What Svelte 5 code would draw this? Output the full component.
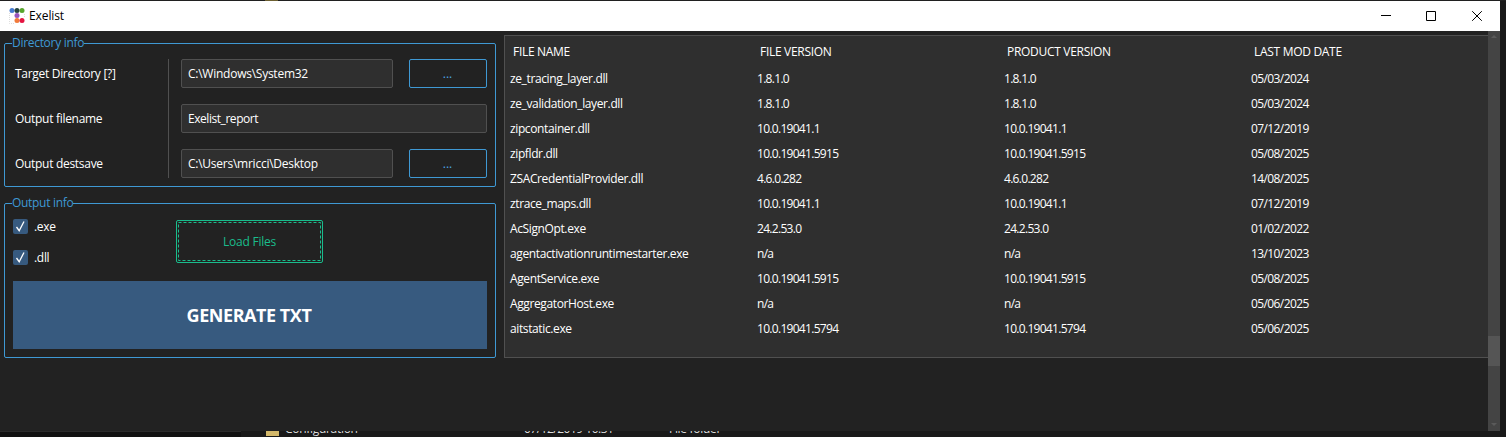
<script>
  const columns = ['FILE NAME', 'FILE VERSION', 'PRODUCT VERSION', 'LAST MOD DATE'];
  const files = [
    ['ze_tracing_layer.dll', '1.8.1.0', '05/03/2024'],
    ['ze_validation_layer.dll', '1.8.1.0', '05/03/2024'],
    ['zipcontainer.dll', '10.0.19041.1', '07/12/2019'],
    ['zipfldr.dll', '10.0.19041.5915', '05/08/2025'],
    ['ZSACredentialProvider.dll', '4.6.0.282', '14/08/2025'],
    ['ztrace_maps.dll', '10.0.19041.1', '07/12/2019'],
    ['AcSignOpt.exe', '24.2.53.0', '01/02/2022'],
    ['agentactivationruntimestarter.exe', 'n/a', '13/10/2023'],
    ['AgentService.exe', '10.0.19041.5915', '05/08/2025'],
    ['AggregatorHost.exe', 'n/a', '05/06/2025'],
    ['aitstatic.exe', '10.0.19041.5794', '05/06/2025']
  ];
  const types = ['.exe', '.dll'];
</script>

<div class="desktop">
  <div class="behind-top"><i></i></div>
  <div class="window">
    <header>
      <svg class="logo" width="16" height="16" viewBox="0 0 16 16">
        <path d="M.5 5v10.500H5M15.500 6v4" fill="none" stroke="#ddd" stroke-dasharray="1 1" />
        <circle cx="3" cy="2.500" r="2.500" fill="#477bd1" />
        <circle cx="8" cy="2.500" r="2.500" fill="#26443f" />
        <circle cx="13" cy="2.500" r="2.500" fill="#58a52d" />
        <circle cx="8" cy="7.500" r="2.500" fill="#9855bd" />
        <circle cx="8" cy="12.500" r="2.500" fill="#f17b3b" />
        <circle cx="13" cy="12.500" r="2.500" fill="#e51440" />
      </svg>
      <h1>Exelist</h1>
      <div class="controls">
        <svg viewBox="0 0 10 10"><path d="M0 4.500H10" /></svg>
        <svg viewBox="0 0 10 10"><path d="M.5 .5H9.500V9.500H.5Z" /></svg>
        <svg viewBox="0 0 10 10"><path d="M.2 .2L9.800 9.800M9.800 .2L.2 9.800" /></svg>
      </div>
    </header>
    <main>
      <div class="left">
        <section class="group directory">
          <h2>Directory info</h2>
          <div class="labels">
            <span>Target Directory [?]</span><span>Output filename</span><span>Output destsave</span>
          </div>
          <div class="fields">
            <div class="field">C:\Windows\System32</div>
            <button class="browse">...</button>
            <div class="field name">Exelist_report</div>
            <div class="field">C:\Users\mricci\Desktop</div>
            <button class="browse">...</button>
          </div>
        </section>
        <section class="group output">
          <h2>Output info</h2>
          <div class="options">
            <div class="checks">
              {#each types as type}
                <div class="check">
                  <svg width="15" height="15" viewBox="0 0 15 15">
                    <rect width="15" height="15" rx="2" fill="#375a7f" />
                    <path d="M3.500 8L6.200 11.700L11 2.500" fill="none" stroke="#fff" stroke-width="1.300" />
                  </svg>
                  <span>{type}</span>
                </div>
              {/each}
            </div>
            <button class="load">
              <svg width="145" height="41"><rect x="1.500" y="1.500" width="142" height="38" /></svg>
              <span>Load Files</span>
            </button>
          </div>
          <button class="generate">GENERATE TXT</button>
        </section>
      </div>
      <div class="table">
        <div class="row head">
          {#each columns as column}<span>{column}</span>{/each}
        </div>
        {#each files as [name, version, date]}
          <div class="row">
            <span class="filename">{name}</span>
            <span class="version">{version}</span>
            <span class="version">{version}</span>
            <span class="date">{date}</span>
          </div>
        {/each}
      </div>
      <div class="scrollbar">
        <svg width="6" height="4" viewBox="0 0 6 4"><path d="M0 3L3 0L6 3Z" /></svg>
        <div class="thumb"></div>
        <svg width="6" height="4" viewBox="0 0 6 4"><path d="M0 0H6L3 3Z" /></svg>
      </div>
    </main>
  </div>
  <footer>
    <i class="pane"></i>
    <i class="folder"></i>
    <span class="config">Configuration</span>
    <span class="modified">07/12/2019 10:31</span>
    <span class="kind">File folder</span>
  </footer>
</div>

<style>
  :global(body) { margin: 0; background: #191919; }
  * { box-sizing: border-box; }
  .desktop { height: 437px; overflow: hidden; background: #191919; color: #fff; font: 12px/16px "Open Sans", "Noto Sans", sans-serif; letter-spacing: -.3px; }
  .behind-top { height: 1px; background: #202020; }
  .behind-top i { display: block; width: 13px; height: 1px; margin-left: 265px; background: #6d6032; }
  .window { width: 1500px; height: 430px; background: #222; }
  header { display: flex; align-items: center; height: 30px; padding-left: 8px; background: #fff; color: #000; }
  .logo { margin: -1px 0 0 1px; }
  h1 { margin: 0 0 0 4px; font: inherit; letter-spacing: -.1px; }
  .controls { display: flex; margin-left: auto; }
  .controls svg { width: 10px; height: 10px; margin-left: 36px; fill: none; stroke: #000; }
  .controls svg:first-child { margin-right: -1px; }
  .controls svg:last-child { margin-right: 18px; }
  main { display: flex; height: 400px; }
  .left { width: 504px; padding: 12px 0 0 4px; }
  .group { width: 492px; border: 1px solid #3f99d4; border-radius: 2px; }
  h2 { width: max-content; height: 16px; margin: -9px 0 0 7px; background: #222; color: #3f99d4; font: inherit; white-space: nowrap; }
  .directory { display: grid; grid-template-columns: 164px 1fr; grid-template-rows: 7px 119px; height: 144px; row-gap: 8px; }
  .directory h2 { grid-column: 1 / 3; }
  .labels { display: flex; flex-direction: column; justify-content: space-between; padding: 7px 0 6px 10px; border-right: 1px solid #505050; }
  .fields { display: grid; grid-template-columns: 212px 78px; gap: 16px; padding-left: 12px; }
  .field { height: 29px; padding: 6px; border: 1px solid #505050; border-radius: 2px; background: #2f2f2f; letter-spacing: -.25px; }
  .name { grid-column: 1 / 3; letter-spacing: -.45px; }
  button { padding: 0; border: 1px solid #3f99d4; border-radius: 2px; background: transparent; color: #3f99d4; font: inherit; letter-spacing: -.25px; }
  .browse { padding-right: 1px; color: #4da9e6; letter-spacing: 0; }
  .output { height: 155px; margin-top: 16px; padding: 0 8px; }
  .output h2 { margin-left: -1px; }
  .options { display: flex; height: 70px; }
  .checks { width: 163px; padding-top: 8px; }
  .check { display: flex; align-items: center; height: 15px; margin-bottom: 16px; gap: 6px; }
  .load { display: grid; width: 147px; height: 43px; margin-top: 9px; place-items: center; border-color: #1abc8c; color: #1abc8c; }
  .load > * { grid-area: 1 / 1; }
  .load rect { fill: none; stroke: #1abc8c; stroke-dasharray: 3 2; }
  .generate { display: block; width: 474px; height: 68px; padding-right: 2px; border: 0; border-radius: 0; background: #375a7f; color: #fff; font: bold 18px/24px "Open Sans", sans-serif; letter-spacing: -.45px; }
  .table { width: 984px; height: 323px; margin-top: 4px; padding: 3px 0 0 5px; border: 1px solid #505050; border-right: 0; background: #2f2f2f; }
  .row { display: grid; grid-template-columns: repeat(4, 247px); align-items: center; height: 25px; }
  .head { height: 25px; margin-bottom: 2px; padding-left: 3px; }
  .filename { letter-spacing: -.38px; }
  .version { letter-spacing: -.7px; }
  .date { letter-spacing: -.6px; }
  .scrollbar { display: flex; flex-direction: column; align-items: center; width: 12px; height: 400px; padding: 4px 0; background: #444; }
  .scrollbar svg { fill: #5a5a5a; }
  .thumb { width: 12px; height: 30px; margin: 297px 0 auto; background: #555; }
  footer { display: grid; grid-template-columns: 266px 13px 239px 151px auto; height: 6px; overflow: hidden; color: #ddd; }
  .pane { width: 241px; height: 6px; border-top: 1px solid #2b2b2b; background: #111; }
  .folder { height: 5px; background: #d3b86a; }
  footer span { margin-top: -10px; }
  .config { padding-left: 6px; }
  .modified { padding-left: 6px; letter-spacing: -.5px; }
</style>
